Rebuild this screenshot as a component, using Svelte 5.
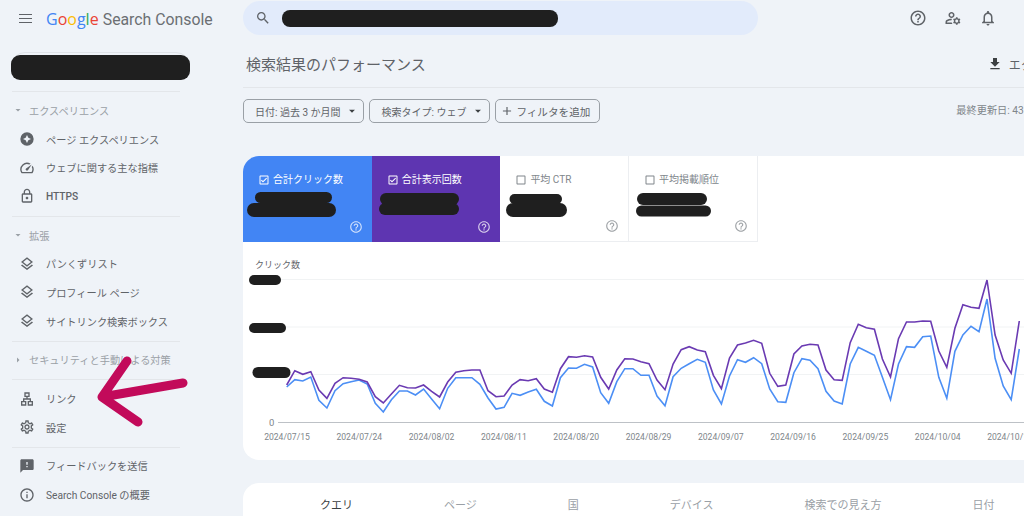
<script>
    const icons = {
        search: 'M15.5 14h-.79l-.28-.27C15.41 12.59 16 11.11 16 9.5 16 5.91 13.09 3 9.5 3S3 5.91 3 9.5 5.91 16 9.5 16c1.61 0 3.09-.59 4.23-1.57l.27.28v.79l5 4.99L20.49 19l-4.99-5zm-6 0C7.01 14 5 11.99 5 9.5S7.01 5 9.5 5 14 7.01 14 9.5 11.99 14 9.5 14z',
        help: 'M11 18h2v-2h-2v2zm1-16C6.48 2 2 6.48 2 12s4.48 10 10 10 10-4.48 10-10S17.52 2 12 2zm0 18c-4.41 0-8-3.59-8-8s3.59-8 8-8 8 3.59 8 8-3.59 8-8 8zm0-14c-2.21 0-4 1.79-4 4h2c0-1.1.9-2 2-2s2 .9 2 2c0 2-3 1.75-3 5h2c0-2.25 3-2.5 3-5 0-2.21-1.79-4-4-4z',
        accounts: 'M4 18v-.65c0-.34.16-.66.41-.81C6.1 15.53 8.03 15 10 15c.03 0 .05 0 .08.01.1-.7.3-1.37.59-1.98-.22-.02-.44-.03-.67-.03-2.42 0-4.68.67-6.61 1.82-.88.52-1.39 1.5-1.39 2.53V20h9.26c-.42-.6-.75-1.28-.97-2H4zM10 12c2.21 0 4-1.79 4-4s-1.79-4-4-4-4 1.79-4 4 1.79 4 4 4zm0-6c1.1 0 2 .9 2 2s-.9 2-2 2-2-.9-2-2 .9-2 2-2zM20.75 16c0-.22-.03-.42-.06-.63l1.14-1.01-1-1.73-1.45.49c-.32-.27-.68-.48-1.08-.63L18 11h-2l-.3 1.49c-.4.15-.76.36-1.08.63l-1.45-.49-1 1.73 1.14 1.01c-.03.21-.06.41-.06.63s.03.42.06.63l-1.14 1.01 1 1.73 1.45-.49c.32.27.68.48 1.08.63L16 21h2l.3-1.49c.4-.15.76-.36 1.08-.63l1.45.49 1-1.73-1.14-1.01c.03-.21.06-.41.06-.63zM17 18c-1.1 0-2-.9-2-2s.9-2 2-2 2 .9 2 2-.9 2-2 2z',
        bell: 'M12 22c1.1 0 2-.9 2-2h-4c0 1.1.89 2 2 2zm6-6v-5c0-3.07-1.64-5.64-4.5-6.32V4c0-.83-.67-1.5-1.5-1.5s-1.5.67-1.5 1.5v.68C7.63 5.36 6 7.92 6 11v5l-2 2v1h16v-1l-2-2zm-2 1H8v-6c0-2.48 1.51-4.5 4-4.5s4 2.02 4 4.5v6z',
        experience: 'M12 2a10 10 0 1 0 0 20 10 10 0 0 0 0-20zm0 4l2 4 4 2-4 2-2 4-2-4-4-2 4-2z',
        speed: 'M20.38 8.57l-1.23 1.85a8 8 0 0 1-.22 7.58H5.07A8 8 0 0 1 15.58 6.85l1.85-1.23A10 10 0 0 0 3.35 19a2 2 0 0 0 1.72 1h13.85a2 2 0 0 0 1.74-1 10 10 0 0 0-.27-10.44zm-9.79 6.84a2 2 0 0 0 2.83 0l5.66-8.49-8.49 5.66a2 2 0 0 0 0 2.83z',
        lock: 'M18 8h-1V6c0-2.76-2.24-5-5-5S7 3.24 7 6v2H6c-1.1 0-2 .9-2 2v10c0 1.1.9 2 2 2h12c1.1 0 2-.9 2-2V10c0-1.1-.9-2-2-2zM9 6c0-1.66 1.34-3 3-3s3 1.34 3 3v2H9V6zm9 14H6V10h12v10zm-6-3c1.1 0 2-.9 2-2s-.9-2-2-2-2 .9-2 2 .9 2 2 2z',
        layers: 'M11.99 18.54l-7.37-5.73L3 14.07l9 7 9-7-1.63-1.27-7.38 5.74zM12 16l7.36-5.73L21 9l-9-7-9 7 1.63 1.27L12 16zm0-11.47L17.74 9 12 13.47 6.26 9 12 4.53z',
        lan: 'M13 22h8v-7h-3v-4h-5V9h3V2H8v7h3v2H6v4H3v7h8v-7H8v-2h8v2h-3v7zM10 7V4h4v3h-4zM9 17v3H5v-3h4zm10 0v3h-4v-3h4z',
        gear: 'M19.43 12.98c.04-.32.07-.64.07-.98 0-.34-.03-.66-.07-.98l2.11-1.65c.19-.15.24-.42.12-.64l-2-3.46c-.09-.16-.26-.25-.44-.25-.06 0-.12.01-.17.03l-2.49 1c-.52-.4-1.08-.73-1.69-.98l-.38-2.65C14.46 2.18 14.25 2 14 2h-4c-.25 0-.46.18-.49.42l-.38 2.65c-.61.25-1.17.59-1.69.98l-2.49-1c-.06-.02-.12-.03-.18-.03-.17 0-.34.09-.43.25l-2 3.46c-.13.22-.07.49.12.64l2.11 1.65c-.04.32-.07.65-.07.98 0 .33.03.66.07.98l-2.11 1.65c-.19.15-.24.42-.12.64l2 3.46c.09.16.26.25.44.25.06 0 .12-.01.17-.03l2.49-1c.52.4 1.08.73 1.69.98l.38 2.65c.03.24.24.42.49.42h4c.25 0 .46-.18.49-.42l.38-2.65c.61-.25 1.17-.59 1.69-.98l2.49 1c.06.02.12.03.18.03.17 0 .34-.09.43-.25l2-3.46c.12-.22.07-.49-.12-.64l-2.11-1.65zm-1.98-1.71c.04.31.05.52.05.73 0 .21-.02.43-.05.73l-.14 1.13.89.7 1.08.84-.7 1.21-1.27-.51-1.04-.42-.9.68c-.43.32-.84.56-1.25.73l-1.06.43-.16 1.13-.2 1.35h-1.4l-.19-1.35-.16-1.13-1.06-.43c-.43-.18-.83-.41-1.23-.71l-.91-.7-1.06.43-1.27.51-.7-1.21 1.08-.84.89-.7-.14-1.13c-.03-.31-.05-.54-.05-.74s.02-.43.05-.73l.14-1.13-.89-.7-1.08-.84.7-1.21 1.27.51 1.04.42.9-.68c.43-.32.84-.56 1.25-.73l1.06-.43.16-1.13.2-1.35h1.39l.19 1.35.16 1.13 1.06.43c.43.18.83.41 1.23.71l.91.7 1.06-.43 1.27-.51.7 1.21-1.07.85-.89.7.14 1.13zM12 8c-2.21 0-4 1.79-4 4s1.79 4 4 4 4-1.79 4-4-1.79-4-4-4zm0 6c-1.1 0-2-.9-2-2s.9-2 2-2 2 .9 2 2-.9 2-2 2z',
        feedback: 'M20 2H4c-1.1 0-1.99.9-1.99 2L2 22l4-4h14c1.1 0 2-.9 2-2V4c0-1.1-.9-2-2-2zm-7 12h-2v-2h2v2zm0-4h-2V6h2v4z',
        info: 'M11 7h2v2h-2zm0 4h2v6h-2zm1-9C6.48 2 2 6.48 2 12s4.48 10 10 10 10-4.48 10-10S17.52 2 12 2zm0 18c-4.41 0-8-3.59-8-8s3.59-8 8-8 8 3.59 8 8-3.59 8-8 8z',
        download: 'M19 9h-4V3H9v6H5l7 7 7-7zM5 18v2h14v-2H5z',
        checked: 'M19 3H5c-1.1 0-2 .9-2 2v14c0 1.1.9 2 2 2h14c1.1 0 2-.9 2-2V5c0-1.1-.9-2-2-2zm0 16H5V5h14v14zM17.99 9l-1.41-1.42-6.59 6.59-2.58-2.57-1.42 1.41 4 3.99z',
        blank: 'M19 5v14H5V5h14m0-2H5c-1.1 0-2 .9-2 2v14c0 1.1.9 2 2 2h14c1.1 0 2-.9 2-2V5c0-1.1-.9-2-2-2z',
        plus: 'M19 13h-6v6h-2v-6H5v-2h6V5h2v6h6v2z',
        down: 'M7 10l5 5 5-5z',
        right: 'M10 7l5 5-5 5z'
    };

    const groups = [
        { label: 'エクスペリエンス', open: true, items: [
            { icon: 'experience', text: 'ページ エクスペリエンス' },
            { icon: 'speed', text: 'ウェブに関する主な指標' },
            { icon: 'lock', text: 'HTTPS', bold: true }
        ]},
        { label: '拡張', open: true, items: [
            { icon: 'layers', text: 'パンくずリスト' },
            { icon: 'layers', text: 'プロフィール ページ' },
            { icon: 'layers', text: 'サイトリンク検索ボックス' }
        ]},
        { label: 'セキュリティと手動による対策', open: false, items: [] },
        { items: [
            { icon: 'lan', text: 'リンク' },
            { icon: 'gear', text: '設定' }
        ]},
        { items: [
            { icon: 'feedback', text: 'フィードバックを送信' },
            { icon: 'info', text: 'Search Console の概要' }
        ]}
    ];

    // blob: x1, y, x2, y, thickness of the scribbled-out values
    const metrics = [
        { label: '合計クリック数', on: 'blue', blob: [[17.5, 41.5, 83.5, 41.5, 11], [11, 54, 86, 54, 14]] },
        { label: '合計表示回数', on: 'purple', blob: [[14, 43, 81, 43, 12], [13, 53, 81, 53, 12]] },
        { label: '平均 CTR', blob: [[14.5, 43, 57, 43, 10], [13, 54, 60, 54, 14]] },
        { label: '平均掲載順位', blob: [[14, 43, 72, 43, 12], [12.5, 55, 76.5, 55, 11]] }
    ];

    const purple = [345,302,313,305,360,385,340,323,325,328,336,380,399,372,346,353,354,345,364,381,336,307,302,300,300,362,380,378,345,329,332,326,357,367,296,260,262,257,261,322,357,300,266,
        267,275,281,330,359,282,239,230,240,245,316,356,264,225,219,211,220,310,349,345,252,228,223,225,300,329,331,218,163,173,178,267,321,206,156,156,153,154,243,292,175,104,112,115,30,195,270,310,153];
    const blue = [351,329,333,321,391,414,362,341,335,330,342,400,426,389,363,363,375,357,387,416,355,323,323,323,343,384,417,412,370,376,366,358,394,408,323,294,295,283,291,368,400,335,296,
        296,316,316,378,407,320,295,281,268,277,360,402,318,269,277,263,281,357,395,397,308,266,271,296,364,393,402,282,232,244,256,322,389,282,230,232,200,198,322,385,244,195,169,185,87,265,348,389,237];

    // traced from the screenshot crop: y = 270 + v / 3
    const toPoints = (values) => values.map((v, i) => `${(286.7 + i * 8.05).toFixed(1)},${(270 + v / 3).toFixed(1)}`).join(' ');

    const dates = ['2024/07/15','2024/07/24','2024/08/02','2024/08/11','2024/08/20','2024/08/29','2024/09/07','2024/09/16','2024/09/25','2024/10/04','2024/10/13'];
    const tabs = ['クエリ','ページ','国','デバイス','検索での見え方','日付'];
</script>

{#snippet icon(name, cls = '')}
    <svg class="icon {cls}" viewBox="0 0 24 24"><path d={icons[name]} /></svg>
{/snippet}

<div class="page">
    <aside class="sidebar">
        <div class="brand">
            <div class="burger"><span></span><span></span><span></span></div>
            <div class="logo">
                <span class="g-blue">G</span><span class="g-red">o</span><span class="g-yellow">o</span><span class="g-blue">g</span><span class="g-green">l</span><span class="g-red">e</span>
                <span class="product">Search Console</span>
            </div>
        </div>

        <div class="property">
            <div class="property-blob"></div>
        </div>

        {#each groups as group}
            <div class="group">
                {#if group.label}
                    <div class="section">
                        {@render icon(group.open ? 'down' : 'right', 'caret')}
                        <span>{group.label}</span>
                    </div>
                {/if}
                {#each group.items as item}
                    <div class="item">
                        {@render icon(item.icon, 'nav-icon')}
                        <span class:bold={item.bold}>{item.text}</span>
                    </div>
                {/each}
            </div>
        {/each}
    </aside>

    <main class="main">
        <header class="topbar">
            <div class="search">
                {@render icon('search', 'search-icon')}
                <div class="search-blob"></div>
            </div>
            <div class="actions">
                {@render icon('help', 'action')}
                {@render icon('accounts', 'action')}
                {@render icon('bell', 'action')}
            </div>
        </header>

        <div class="title-row">
            <h1>検索結果のパフォーマンス</h1>
            <div class="export">
                {@render icon('download', 'export-icon')}
                <span>エクスポート</span>
            </div>
        </div>

        <div class="filters">
            <button class="chip">日付: 過去 3 か月間 {@render icon('down', 'chip-caret')}</button>
            <button class="chip">検索タイプ: ウェブ {@render icon('down', 'chip-caret')}</button>
            <button class="chip add">{@render icon('plus', 'chip-plus')} フィルタを追加</button>
            <span class="updated">最終更新日: 43 時間前</span>
        </div>

        <section class="chart-card">
            <div class="metrics">
                {#each metrics as m}
                    <div class="metric {m.on ?? ''}">
                        <div class="metric-label">
                            {@render icon(m.on ? 'checked' : 'blank', 'check')}
                            <span>{m.label}</span>
                        </div>
                        <svg class="blob" width="129" height="86" viewBox="0 0 129 86">
                            {#each m.blob as b}
                                <path d="M{b[0]} {b[1]} H{b[2]}" stroke="#1f1f1f" stroke-width={b[4]} stroke-linecap="round" />
                            {/each}
                        </svg>
                        {@render icon('help', 'metric-help')}
                    </div>
                {/each}
            </div>

            <svg class="chart" viewBox="243 242 781 218" width="781" height="218">
                <text x="255" y="268" class="axis-title">クリック数</text>
                <line x1="278" x2="1024" y1="279.5" y2="279.5" class="grid" />
                <line x1="278" x2="1024" y1="327" y2="327" class="grid" />
                <line x1="278" x2="1024" y1="374.5" y2="374.5" class="grid" />
                <line x1="278" x2="1024" y1="422.5" y2="422.5" class="baseline" />
                <path d="M254 280 H276" stroke="#1f1f1f" stroke-width="10" stroke-linecap="round" />
                <path d="M254 328 H281" stroke="#1f1f1f" stroke-width="10" stroke-linecap="round" />
                <path d="M258 372.5 H285" stroke="#1f1f1f" stroke-width="11" stroke-linecap="round" />
                <text x="269" y="425.5" class="zero">0</text>
                <polyline points={toPoints(blue)} class="series" stroke="#4c8ff5" />
                <polyline points={toPoints(purple)} class="series" stroke="#6a3ab2" />
                {#each dates as d, i}
                    <text x={287 + i * 72.3} y="439.5" class="date">{d}</text>
                {/each}
            </svg>
        </section>

        <section class="table-card">
            {#each tabs as t, i}
                <span class="tab" class:active={i === 0}>{t}</span>
            {/each}
        </section>
    </main>

    <svg class="arrow" width="110" height="80" viewBox="95 355 110 80">
        <path d="M183 383 L102 397 M127 361 L102 397 L138 422" fill="none" stroke="#c20a5a" stroke-width="9" stroke-linecap="round" stroke-linejoin="round" />
    </svg>
</div>

<style>
    :global(body) {
        margin: 0;
        background: #eff3f8;
        overflow: hidden;
    }

    .page {
        position: relative;
        width: 1024px;
        height: 516px;
        overflow: hidden;
        display: flex;
        background: #eff3f8;
        color: #5f6368;
        font-family: Roboto, "Noto Sans CJK JP", sans-serif;
    }

    .icon {
        display: block;
        fill: currentColor;
        flex: none;
    }

    .sidebar {
        width: 243px;
        flex: none;
    }

    .brand {
        height: 37px;
        display: flex;
        align-items: center;
        padding-left: 19px;
    }

    .burger {
        width: 13px;
        display: flex;
        flex-direction: column;
        gap: 2.5px;
        margin-right: 14px;
    }

    .burger span {
        height: 1.5px;
        background: #5f6368;
    }

    .logo {
        font-size: 16px;
        white-space: nowrap;
        font-family: "Open Sans", sans-serif;
    }

    .product {
        font-family: Roboto, sans-serif;
        font-size: 15.8px;
        color: #6b6f73;
    }

    .g-blue { color: #4285f4; }
    .g-red { color: #ea4335; }
    .g-yellow { color: #fbbc05; }
    .g-green { color: #34a853; }

    .property {
        width: 179px;
        height: 28px;
        margin: 15px 0 11px 11px;
        box-sizing: border-box;
        border: 1px solid #dfe3e8;
        border-radius: 14px;
    }

    .property-blob {
        margin: 2px -1px 0 -1px;
        height: 25px;
        background: #1f1f1f;
        border-radius: 9px;
    }

    .group {
        width: 168px;
        margin-left: 12px;
        padding: 4px 0 5px;
        border-top: 1px solid #e3e6ea;
    }

    .section, .item {
        height: 28.7px;
        display: flex;
        align-items: center;
        font-size: 10.2px;
        white-space: nowrap;
    }

    .section {
        color: #9aa0a6;
    }

    .caret {
        width: 12px;
        height: 12px;
        margin-right: 5px;
    }

    .item .bold {
        font-weight: 500;
    }

    .nav-icon {
        width: 16px;
        height: 16px;
        margin: 0 11px 0 7px;
    }

    .main {
        width: 900px;
        flex: none;
    }

    .topbar {
        height: 36px;
        display: flex;
        align-items: center;
    }

    .search {
        width: 515px;
        height: 34px;
        border-radius: 17px;
        background: #e2ebfb;
        display: flex;
        align-items: center;
        color: #5f6368;
    }

    .search-icon {
        width: 16px;
        height: 16px;
        margin: 0 11px 0 12px;
    }

    .search-blob {
        width: 276px;
        height: 17px;
        border-radius: 8px;
        background: #1f1f1f;
    }

    .actions {
        display: flex;
        gap: 17px;
        margin-left: 151px;
        color: #5f6368;
    }

    .action {
        width: 18px;
        height: 18px;
    }

    .title-row {
        height: 52px;
        box-sizing: border-box;
        padding-top: 5px;
        display: flex;
        align-items: center;
        border-bottom: 1px solid #e3e6ea;
    }

    h1 {
        margin: 0 0 1px 3px;
        font-size: 15px;
        font-weight: 400;
        color: #5f6368;
    }

    .export {
        display: flex;
        align-items: center;
        margin-left: 561px;
        font-size: 12px;
        white-space: nowrap;
    }

    .export-icon {
        width: 16px;
        height: 16px;
        margin-right: 6px;
        color: #3c4043;
    }

    .filters {
        height: 68px;
        padding-top: 11px;
        box-sizing: border-box;
        display: flex;
        align-items: flex-start;
        gap: 5px;
    }

    .chip {
        height: 24px;
        padding: 0 4px 0 11px;
        display: flex;
        align-items: center;
        border: 1px solid #9aa0a6;
        border-radius: 5px;
        background: transparent;
        color: #5f6368;
        font: inherit;
        font-size: 10px;
        white-space: nowrap;
    }

    .chip.add {
        padding: 0 9px 0 4px;
        gap: 2px;
        font-size: 10.6px;
    }

    .chip-caret {
        width: 14px;
        height: 14px;
        margin-left: 5px;
        color: #3c4043;
    }

    .chip-plus {
        width: 14px;
        height: 14px;
    }

    .updated {
        margin-left: 351px;
        line-height: 24px;
        font-size: 10.2px;
        color: #80868b;
        white-space: nowrap;
    }

    .chart-card {
        height: 304px;
        background: #fff;
        border-radius: 16px 0 0 16px;
        overflow: hidden;
    }

    .metrics {
        display: flex;
        height: 86px;
    }

    .metric {
        position: relative;
        width: 128.7px;
        box-sizing: border-box;
        color: #80868b;
        border-right: 1px solid #eceef1;
        border-bottom: 1px solid #eceef1;
    }

    .metric.blue {
        background: #4285f4;
        color: #fff;
        border: 0;
    }

    .metric.purple {
        background: #5e35b1;
        color: #fff;
        border: 0;
    }

    .metric-label {
        display: flex;
        align-items: center;
        gap: 3px;
        padding: 17px 0 0 15px;
        font-size: 10px;
        line-height: 14px;
    }

    .check {
        width: 12px;
        height: 12px;
    }

    .blob {
        position: absolute;
        left: 0;
        top: 0;
    }

    .metric-help {
        position: absolute;
        right: 9px;
        bottom: 8px;
        width: 14px;
        height: 14px;
        opacity: 0.75;
    }

    .chart {
        display: block;
    }

    .axis-title {
        font-size: 9px;
        fill: #5f6368;
    }

    .grid {
        stroke: #f1f3f4;
        stroke-width: 1;
    }

    .baseline {
        stroke: #bdc1c6;
        stroke-width: 1;
    }

    .zero {
        font-size: 9.5px;
        fill: #80868b;
    }

    .series {
        fill: none;
        stroke-width: 1.6;
        stroke-linejoin: miter;
    }

    .date {
        font-size: 8.6px;
        fill: #80868b;
        text-anchor: middle;
    }

    .table-card {
        margin-top: 23px;
        height: 60px;
        background: #fff;
        border-radius: 16px 0 0 0;
        display: flex;
        gap: 91px;
        padding: 15px 0 0 77px;
        box-sizing: border-box;
    }

    .tab {
        font-size: 11px;
        line-height: 16px;
        color: #9aa0a6;
        white-space: nowrap;
    }

    .tab.active {
        color: #3c4043;
    }

    .arrow {
        position: absolute;
        left: 95px;
        top: 355px;
    }
</style>
